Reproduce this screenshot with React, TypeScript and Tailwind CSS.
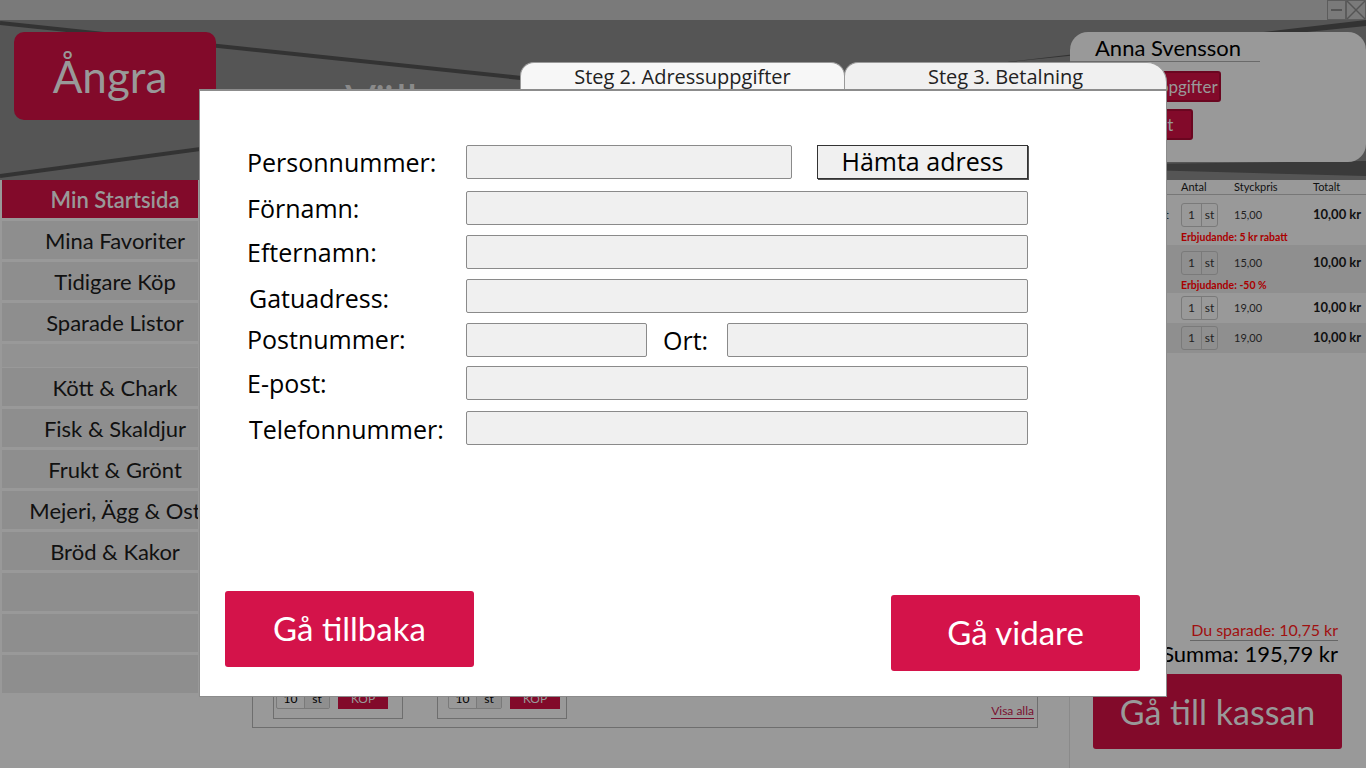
import type { ReactNode } from "react";

const SIDEBAR_TOP = ["Mina Favoriter", "Tidigare Köp", "Sparade Listor"];
const SIDEBAR_CATS = [
  "Kött & Chark",
  "Fisk & Skaldjur",
  "Frukt & Grönt",
  "Mejeri, Ägg & Ost",
  "Bröd & Kakor",
  "",
  "",
  "",
];

const CART = [
  { name: "Vetebröd, skivat", price: "15,00", offer: "Erbjudande: 5 kr rabatt", dark: false },
  { name: "Laktosfri mjölk", price: "15,00", offer: "Erbjudande: -50 %", dark: true },
  { name: "Bananer", price: "19,00", offer: "", dark: false },
  { name: "Äpplen", price: "19,00", offer: "", dark: true },
];

const FIELDS = ["Förnamn:", "Efternamn:", "Gatuadress:"];

function TopStrip() {
  return (
    <div className="flex h-[20px] justify-end bg-[#7a7a7a]">
      <svg width="40" height="20" viewBox="0 0 40 20">
        <rect x="1.5" y="0.5" width="18" height="19" fill="none" stroke="#5c5c5c" />
        <line x1="5" y1="10" x2="16" y2="10" stroke="#555" strokeWidth="2" />
        <rect x="20.5" y="0.5" width="19" height="19" fill="none" stroke="#5c5c5c" />
        <line x1="21" y1="1" x2="39" y2="19" stroke="#555" strokeWidth="1.5" />
        <line x1="39" y1="1" x2="21" y2="19" stroke="#555" strokeWidth="1.5" />
      </svg>
    </div>
  );
}

function Header() {
  return (
    <div className="relative flex h-[160px] items-start bg-[#555555]">
      <svg
        className="pointer-events-none absolute inset-0"
        width="1366"
        height="160"
        viewBox="0 0 1366 160"
      >
        <line x1="0" y1="3" x2="540" y2="60" stroke="#333" strokeWidth="4" />
        <line x1="0" y1="156" x2="260" y2="121" stroke="#333" strokeWidth="4" />
        <polygon points="990,44 1366,0 1366,6" fill="#333" />
        <polygon points="1000,146 1366,141 1366,156" fill="#3a3a3a" />
      </svg>
      <button className="relative ml-[14px] mt-[12px] flex h-[88px] w-[202px] items-center justify-center rounded-[10px] bg-[#820a2a] pr-[10px] text-[44px] text-[#999]">
        Ångra
      </button>
      <div className="relative ml-[129px] mt-[46px] text-[46px] text-[#8a8a8a]">
        Välkommen
      </div>
      <div className="relative ml-auto mt-[12px] h-[130px] w-[296px] rounded-[18px] rounded-bl-none bg-[#999]">
        <div className="w-[190px] border-b border-[#6a6a6a] pl-[25px] pt-[3px] text-[22px] leading-[26px] text-black">
          Anna Svensson
        </div>
        <div className="ml-[30px] mt-[9px] flex flex-col gap-[7px]">
          <div className="flex h-[31px] w-[121px] items-center justify-center whitespace-nowrap rounded-[3px] border-2 border-[#6a0620] bg-[#820a2a] pl-[4px] text-[17px] text-[#999]">
            Mina uppgifter
          </div>
          <div className="flex h-[31px] w-[93px] items-center justify-center whitespace-nowrap rounded-[3px] border-2 border-[#6a0620] bg-[#820a2a] pr-[10px] text-[17px] text-[#999]">
            Logga ut
          </div>
        </div>
      </div>
    </div>
  );
}

function SideItem({ children }: { children?: ReactNode }) {
  return (
    <div className="mb-[3px] flex h-[38px] items-center justify-center whitespace-nowrap bg-[#8e8e8e] pl-[30px] text-[22px] text-[#111]">
      {children}
    </div>
  );
}

function Sidebar() {
  return (
    <div className="w-[198px] shrink-0 bg-[#999] pl-[2px]">
      <div className="mb-[3px] flex h-[38px] items-center justify-center bg-[#820a2a] pl-[30px] text-[22px] font-semibold text-[#999]">
        Min Startsida
      </div>
      {SIDEBAR_TOP.map((s) => (
        <SideItem key={s}>{s}</SideItem>
      ))}
      <div className="mb-[1px] h-[23px] bg-[#929292]" />
      {SIDEBAR_CATS.map((s, i) => (
        <SideItem key={i}>{s}</SideItem>
      ))}
    </div>
  );
}

function ProductCard({ pl }: { pl: string }) {
  return (
    <div className={`flex h-[170px] w-[130px] flex-col justify-end border border-[#6e6e6e] pb-[9px] ${pl}`}>
      <div className="flex items-center gap-[8px]">
        <div className="flex h-[21px] w-[54px] overflow-hidden rounded-[2px] border border-[#7a7a7a] text-[12px]">
          <span className="flex w-[28px] items-center justify-center border-r border-[#7a7a7a]">10</span>
          <span className="flex flex-1 items-center justify-center bg-[#8f8f8f]">st</span>
        </div>
        <div className="flex h-[21px] w-[50px] items-center justify-center bg-[#820a2a] text-[12px] text-[#999]">
          KÖP
        </div>
      </div>
    </div>
  );
}

function Main() {
  return (
    <div className="flex flex-1 flex-col bg-[#999] pb-[40px] pl-[54px] pr-[31px] pt-[24px]">
      <div className="flex flex-1 flex-col justify-end border border-[#6e6e6e]">
        <div className="flex items-end justify-between pb-[8px] pl-[20px] pr-[3px]">
          <div className="flex gap-[34px]">
            <ProductCard pl="pl-[2px]" />
            <ProductCard pl="pl-[10px]" />
          </div>
          <a className="border-b border-[#7a1030] text-[12px] leading-[14px] text-[#7a1030]">Visa alla</a>
        </div>
      </div>
    </div>
  );
}

function QtyBox() {
  return (
    <div className="flex h-[24px] w-[37px] overflow-hidden rounded-[3px] border border-[#7a7a7a] text-[12px] text-[#222]">
      <span className="flex w-[20px] items-center justify-center border-r border-[#7a7a7a]">1</span>
      <span className="flex flex-1 items-center justify-center">st</span>
    </div>
  );
}

function Cart() {
  return (
    <div className="flex w-[297px] shrink-0 flex-col border-l border-[#8a8a8a] bg-[#999]">
      <div className="flex h-[15px] items-center border-b border-[#777] text-[11px] text-[#111]">
        <span className="w-[111px]" />
        <span className="w-[53px]">Antal</span>
        <span className="w-[79px]">Styckpris</span>
        <span>Totalt</span>
      </div>
      <div className="mt-[2px]">
        {CART.map((r) => (
          <div key={r.name} className={`${r.dark ? "bg-[#8f8f8f]" : "bg-[#999]"} ${r.offer ? "h-[48px] pt-[6px]" : "h-[30px] pt-[3px]"}`}>
            <div className="flex items-center">
              <span className="w-[108px] overflow-hidden whitespace-nowrap pl-[14px] text-[12px] text-[#111]">{r.name}</span>
              <span className="w-[56px] pl-[3px]">
                <QtyBox />
              </span>
              <span className="w-[79px] text-[11px] text-[#222]">{r.price}</span>
              <span className="text-[13px] font-bold text-[#111]">10,00 kr</span>
            </div>
            {r.offer && (
              <div className="pl-[111px] pt-[4px] text-[10.5px] font-bold leading-[13px] text-[#a00]">{r.offer}</div>
            )}
          </div>
        ))}
      </div>
      <div className="mt-auto flex flex-col items-end pb-[19px] pr-[28px]">
        <span className="border-b border-[#666] pb-[1px] pl-[1px] text-[16px] leading-[19px] text-[#a01010]">
          Du sparade: 10,75 kr
        </span>
        <span className="text-[22px] leading-[26px] text-black">Summa: 195,79 kr</span>
        <button className="-mr-[4px] mt-[7px] flex h-[75px] w-[249px] items-center justify-center rounded-[3px] bg-[#820a2a] text-[34px] text-[#999]">
          Gå till kassan
        </button>
      </div>
    </div>
  );
}

function Input({ className = "" }: { className?: string }) {
  return <div className={`h-[34px] rounded-[2px] border border-[#8a8a8a] bg-[#f0f0f0] ${className}`} />;
}

function Label({ children, shift = "" }: { children: ReactNode; shift?: string }) {
  return (
    <span className={`w-[219px] shrink-0 whitespace-nowrap text-[25px] leading-[30px] text-black ${shift}`}>
      {children}
    </span>
  );
}

function Modal() {
  return (
    <div className="absolute left-[199px] top-[62px] w-[968px] font-['Open_Sans',sans-serif]">
      <div className="flex h-[27px] pl-[321px]">
        <div className="flex w-[325px] items-center justify-center rounded-t-[14px] border border-b-0 border-[#9a9a9a] bg-[#f7f7f7] pt-[2px] text-[20px] text-[#222]">
          Steg 2. Adressuppgifter
        </div>
        <div className="-ml-px flex w-[323px] items-center justify-center rounded-tl-[14px] rounded-tr-[20px] border border-b-0 border-[#9a9a9a] bg-[#f0f0f0] pt-[2px] text-[20px] text-[#222]">
          Steg 3. Betalning
        </div>
      </div>
      <div className="flex h-[608px] flex-col border border-t-2 border-[#8c8c8c] bg-white">
        <div className="flex flex-col gap-[10px] pl-[47px] pr-[138px] pt-[54px]">
          <div className="mb-[2px] flex h-[34px] items-center">
            <Label>Personnummer:</Label>
            <Input className="w-[326px]" />
            <button className="ml-[25px] flex h-[34px] flex-1 items-center justify-center border border-[#333] bg-[#f0f0f0] text-[25px] text-black shadow-[1px_1px_0_#555]">
              Hämta adress
            </button>
          </div>
          {FIELDS.map((f) => (
            <div key={f} className="flex h-[34px] items-center">
              <Label shift={f === "Gatuadress:" ? "pl-[2px] pt-[4px]" : ""}>{f}</Label>
              <Input className="flex-1" />
            </div>
          ))}
          <div className="flex h-[34px] items-center">
            <Label shift="-mt-[2px]">Postnummer:</Label>
            <Input className="w-[181px]" />
            <span className="w-[80px] shrink-0 pl-[16px] text-[25px] leading-[30px] text-black">Ort:</span>
            <Input className="flex-1" />
          </div>
          <div className="-mt-[1px] flex h-[34px] items-center">
            <Label>E-post:</Label>
            <Input className="flex-1" />
          </div>
          <div className="mt-[1px] flex h-[34px] items-center">
            <Label shift="pl-[2px] pt-[2px]">Telefonnummer:</Label>
            <Input className="flex-1" />
          </div>
        </div>
        <div className="mt-auto flex items-end justify-between pb-[25px] pl-[25px] pr-[26px] font-['Lato',sans-serif]">
          <button className="mb-[4px] flex h-[76px] w-[249px] items-center justify-center rounded-[3px] bg-[#d4134a] text-[33px] text-white">
            Gå tillbaka
          </button>
          <button className="flex h-[76px] w-[249px] items-center justify-center rounded-[3px] bg-[#d4134a] text-[33px] text-white">
            Gå vidare
          </button>
        </div>
      </div>
    </div>
  );
}

export default function App() {
  return (
    <div className="relative h-[768px] w-[1366px] overflow-hidden bg-[#999] font-['Lato',sans-serif]">
      <TopStrip />
      <Header />
      <div className="flex h-[588px]">
        <Sidebar />
        <Main />
        <Cart />
      </div>
      <Modal />
    </div>
  );
}
